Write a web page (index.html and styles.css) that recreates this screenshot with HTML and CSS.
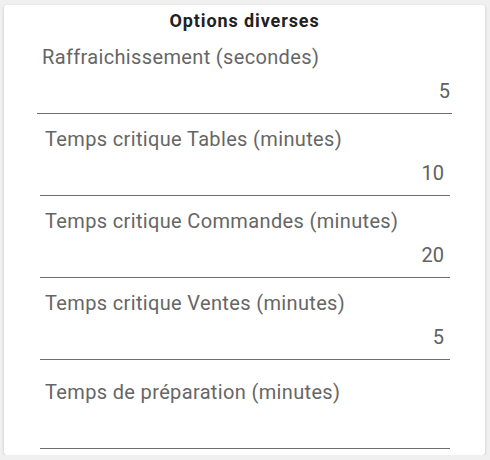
FILE: index.html
```html
<!DOCTYPE html>
<html lang="fr">
<head>
    <meta charset="UTF-8">
    <title>Options diverses</title>
    <link rel="stylesheet" href="styles.css">
</head>
<body>
    <div class="card">
        <div class="card-title">Options diverses</div>

        <div class="field field-first">
            <div class="field-label">Raffraichissement (secondes)</div>
            <div class="field-value">5</div>
        </div>

        <div class="field">
            <div class="field-label">Temps critique Tables (minutes)</div>
            <div class="field-value">10</div>
        </div>

        <div class="field">
            <div class="field-label">Temps critique Commandes (minutes)</div>
            <div class="field-value">20</div>
        </div>

        <div class="field">
            <div class="field-label">Temps critique Ventes (minutes)</div>
            <div class="field-value">5</div>
        </div>

        <div class="field field-last">
            <div class="field-label">Temps de préparation (minutes)</div>
            <div class="field-value"></div>
        </div>
    </div>
</body>
</html>
```

FILE: styles.css
```css
* {
    margin: 0;
    padding: 0;
    box-sizing: border-box;
    font-family: Roboto, 'Liberation Sans', sans-serif;
}

body {
    background-color: #f0f0f0;
    padding: 5px 5px 0 4px;
}

.card {
    width: 481px;
    height: 450px;
    background-color: #ffffff;
    border-radius: 3px;
    box-shadow: 0 1px 3px rgba(0, 0, 0, 0.2);
    padding-top: 6px;
}

.card-title {
    font-size: 18px;
    font-weight: 700;
    line-height: 20px;
    letter-spacing: 0.9px;
    text-align: center;
    color: #212121;
    margin-bottom: 1px;
}

.field {
    margin: 0 35px 0 36px;
    padding-top: 13px;
    border-bottom: 1px solid #6e6e6e;
}

.field-first {
    margin: 0 33px;
}

.field-last {
    padding-top: 20px;
}

.field-label {
    font-size: 20px;
    line-height: 24px;
    letter-spacing: 0.35px;
    color: #666666;
    padding-left: 5px;
}

.field-value {
    font-size: 20px;
    line-height: 24px;
    height: 24px;
    color: #616161;
    text-align: right;
    margin: 10px 0;
    padding-right: 6px;
}

.field-first .field-value {
    padding-right: 2px;
}
```
